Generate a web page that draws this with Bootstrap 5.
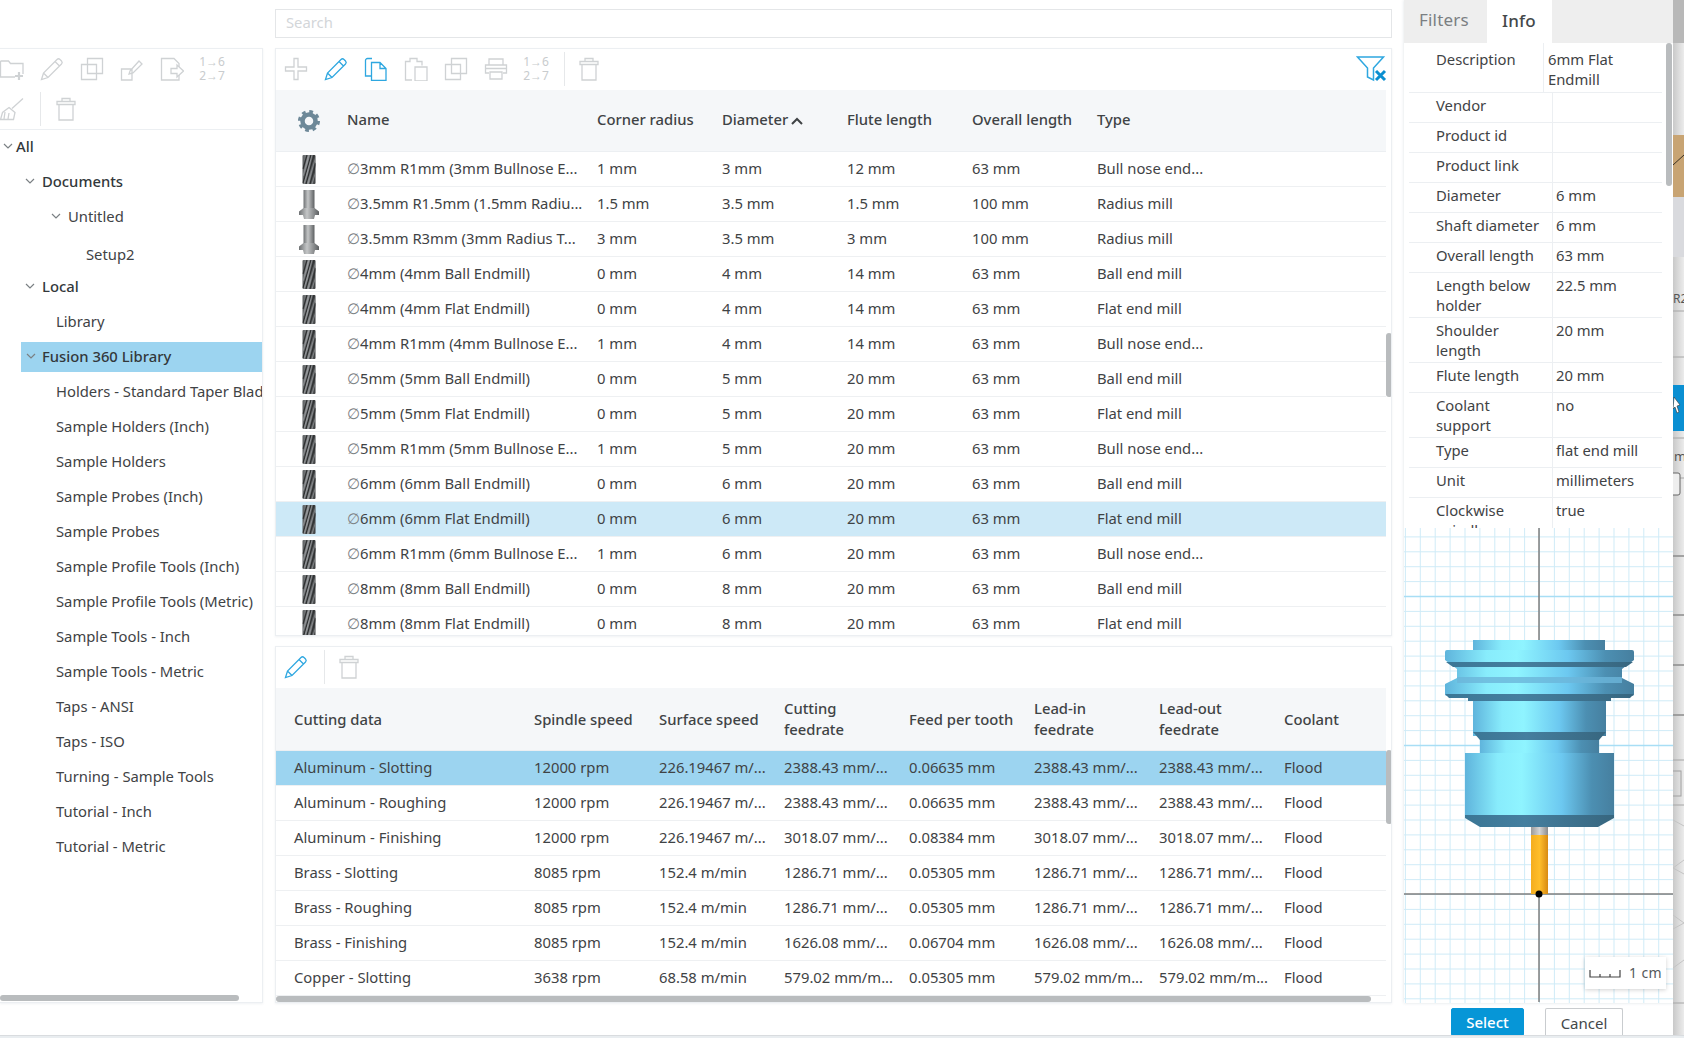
<!DOCTYPE html>
<html lang="en">
<head>
<meta charset="utf-8">
<title>Tool Library</title>
<link href="https://cdn.jsdelivr.net/npm/bootstrap@5.3.0/dist/css/bootstrap.min.css" rel="stylesheet">
<style>
html,body{margin:0;height:1038px;overflow:hidden}
body{width:1684px;background:#fff;color:#3f4345;font-family:"Noto Sans","Liberation Sans",sans-serif;font-size:14.8px;line-height:20px}
.shell{width:1684px;height:1038px}
.workspace{width:1673px;height:1038px}
.upper{height:1003px}
.side-col{width:263px;padding-top:48px;margin-right:12px;flex:none}
.mid-col{width:1117px;margin-right:12px;flex:none}
.right-col{width:269px;flex:none;box-shadow:0 0 3px rgba(60,90,110,.18)}
.pane{background:#fff;border:1px solid #eceff2;box-shadow:0 1px 2px rgba(60,90,110,.08);position:relative;overflow:hidden}
.side-pane{height:955px;border-left:0}
.search-box.form-control{height:29px;margin:9px 0 10px;border:1px solid #e4e6e8;border-radius:0;padding:0 10px 4px;font-size:14.8px;line-height:20px;box-shadow:none}
.search-box::placeholder{color:#d3d6d9}
.tool-pane{height:588px;margin-bottom:10px}
.data-pane{height:357px}
.tbar{height:41px;color:#cfd2d4}
.tbtn{width:40px;height:40px;flex:none;display:flex;align-items:center;justify-content:center;color:#cfd2d4}
.tbtn.on{color:#2ea7e0}
.tbtn svg{width:24px;height:24px;fill:none;stroke:currentColor;stroke-width:1.3}
.tsep{width:1px;height:34px;margin:3px 4px 3px 8px;background:#e6e8ea;flex:none}
.nums{font-size:12px;line-height:14px;color:#c9ccce;text-align:center;white-space:nowrap}
.side-tools{margin-left:-8px;height:81px;border-bottom:1px solid #eceff2;flex-wrap:wrap;align-content:flex-start}
.side-tools .tsep{margin:3px 5px 3px 8px}
.tree{margin:-1px 0 0;padding:0;list-style:none;white-space:nowrap}
.tree li{height:35px;display:flex;align-items:center;padding-bottom:2px}
.tree li.i0{padding-left:3px}
.tree li.i1{padding-left:25px}
.tree li.i1 .chev{margin-right:7px}
.tree li.i2 .chev{margin-right:7px}
.tree li.i2{padding-left:51px}
.tree li.i3{padding-left:86px}
.tree li.l1,.tree li.l2{padding-left:56px}
.tree li.low{padding-top:7px}
.tree li.sel{height:30px;margin:3px 0 2px 21px;padding-left:5px;background:#9cd4f0;font-weight:500;color:#33383b}
.tree li.sel .chev{margin-right:6px}
.chev{width:10px;height:6px;margin-right:3px;fill:none;stroke:#7b8084;stroke-width:1.2;flex:none}
.strong{font-weight:500;color:#33383b}
.grid-t{table-layout:fixed;width:1110px;margin:0;--bs-table-bg:transparent;--bs-table-color:#3f4345;border-collapse:separate;border-spacing:0;white-space:nowrap}
.grid-t>thead>tr>th{background:#f5f7f9;font-weight:500;color:#3f4345;padding:0 8px 0 11px;vertical-align:middle;border-bottom:1px solid #eceff2;white-space:normal;line-height:21px}
.grid-t>tbody>tr>td{height:35px;padding:0 0 2px 11px;vertical-align:middle;border-bottom:1px solid #eef0f2;overflow:hidden}
.hdr-tools>thead>tr>th{height:62px;padding-bottom:2px}
.hdr-data>thead>tr>th{height:63px}
.grid-t>tbody>tr.pick>td{background:#cde9f7}
.grid-t>tbody>tr.pick2>td{background:#9cd4f0}
.c-ic{width:60px}.c-nm{width:250px}.c-125{width:125px}.c-ty{width:300px}
.c-cd{width:247px}.c-co{width:113px}
.grid-t>thead>tr>th.pad-first,.grid-t>tbody>tr>td.pad-first{padding-left:18px}
.grid-t>tbody>tr>td.ic-cell,.grid-t>thead>tr>th.ic-cell{padding:0;text-align:center}
.grid-t .ic-cell svg{display:block;margin:0 auto 0 23px;width:20px;height:29px}
.diam{color:#7d8285}
.sort-up{width:12px;height:8px;margin-left:3px;fill:none;stroke:#3f4345;stroke-width:2}
.grid-t .ic-cell svg.gear{width:24px;height:24px;margin:0 0 0 21px}
.funnel{position:absolute;right:3px;top:6px;width:32px;height:28px}
.thumb{position:absolute;background:#b9bcbe;border-radius:3px}
.th-tool{left:1110px;top:284px;width:6px;height:64px}
.th-data{left:1110px;top:103px;width:6px;height:74px}
.th-dh{left:0;bottom:0;width:1095px;height:6px}
.th-sh{left:0;bottom:1px;width:239px;height:6px}
.th-info{right:1px;top:0;width:6px;height:143px}
.tabbar{height:43px;background:#eeeeee}
.tabbar .nav-link{height:43px;padding:8px 15px 0;font-size:17px;line-height:24px;color:#7b7f82;letter-spacing:.2px;border-radius:0}
.tabbar .tab-f{width:83px}
.tabbar .tab-i{width:65px;background:#fff;color:#44484a;font-weight:500;padding-top:9px}
.info{height:485px;overflow:hidden;position:relative;background:#fff;padding:0 11px 0 5px}
.irow{display:flex;min-height:30px;border-bottom:1px solid #eceff2;line-height:20px}
.irow .k{width:143px;padding:2px 0 2px 27px;flex:none}
.irow .v{flex:1;padding:2px 0 2px 3px;border-left:1px solid #eceff2}
.irow.first .k{width:134px;padding-top:6px;padding-bottom:3px}
.irow.first .v{padding-top:6px;padding-bottom:3px;padding-left:4px}
.irow.two{min-height:45px}
.preview{height:475px;position:relative;overflow:hidden;background:#fff}
.preview>svg{display:block}
.scale-chip{position:absolute;left:181px;top:429px;width:81px;height:32px;background:#fff;box-shadow:0 1px 4px rgba(0,0,0,.18);font-size:14px;color:#55595c;letter-spacing:.4px}
.scale-chip svg{width:32px;height:9px;fill:none;stroke:#444;stroke-width:1.2}
.foot{height:35px;padding-top:5px}
.foot .btn{height:28px;padding:0;font-size:15px;line-height:25px;border-radius:2px}
.btn-go.btn{width:73px;margin-left:1451px;background:#0696d7;border:1px solid #0696d7;color:#fff;font-weight:500}
.btn-no.btn{width:78px;margin-left:21px;height:30px;background:#fff;border:1px solid #c9cccf;color:#44484a;border-bottom:0}
.floor{height:3px;background:#e9edf0;border-top:1px solid #d9dcdf}
.backdrop{width:11px;height:1038px;flex:none;display:block}
</style>
</head>
<body>
<svg width="0" height="0" class="position-absolute">
<defs>
<linearGradient id="millg" x1="0" x2="1" y1="0" y2="0"><stop offset="0" stop-color="#5a5d5f"/><stop offset=".4" stop-color="#8a8d8f"/><stop offset=".7" stop-color="#626567"/><stop offset="1" stop-color="#3a3c3d"/></linearGradient>
<linearGradient id="radg" x1="0" x2="1" y1="0" y2="0"><stop offset="0" stop-color="#6e7173"/><stop offset=".4" stop-color="#c4c6c7"/><stop offset="1" stop-color="#5d6062"/></linearGradient>
<clipPath id="millc"><rect x="3.500" y="0" width="13" height="29" rx="1"/></clipPath>
<symbol id="mill" viewBox="0 0 20 29"><rect x="3.500" y="0" width="13" height="29" rx="1" fill="url(#millg)"/><g clip-path="url(#millc)" fill="none"><path d="M4 14L8 0M4 28L12 0M7 29L15 0M11 29L17 8" stroke="#2f3132" stroke-width="1.300"/><path d="M4 21L10 0M5 29L13 0M9 29L17 1M13 29L17 16" stroke="#a7aaac" stroke-width=".6"/></g></symbol>
<symbol id="radm" viewBox="0 0 20 29"><rect x="4.500" y="0" width="11" height="20" fill="url(#radg)"/><path d="M4.500 18L0 21.500V25h4l1 4h10l1-4h4v-3.500L15.500 18z" fill="url(#radg)"/></symbol>
<symbol id="i-plus" viewBox="0 0 24 24"><path d="M10 1.500h4v8.500h8.500v4H14v8.500h-4V14H1.500v-4H10z"/></symbol>
<symbol id="i-pen" viewBox="0 0 24 24"><path d="M1.500 22.500l2-6.500L17 2.500a2.200 2.200 0 0 1 3 0L21.500 4a2.200 2.200 0 0 1 0 3L8 20.500zM3.500 16L8 20.500M15 4.500L19.500 9"/></symbol>
<symbol id="i-copy" viewBox="0 0 24 24"><path d="M8 1.500H3.500a2 2 0 0 0-2 2V19H7M7.500 5.500H16l6 6v12H7.500zM16 5.500v6h6"/></symbol>
<symbol id="i-paste" viewBox="0 0 24 24"><path d="M8 23H1.500V4.500H6V1.500h7v3h5v4M11 10h12v14H11z"/></symbol>
<symbol id="i-dup" viewBox="0 0 24 24"><path d="M7.500 1.500h15v15h-15zM1.500 7.500h15v15h-15z"/></symbol>
<symbol id="i-print" viewBox="0 0 24 24"><path d="M5 8V2h14v6M5 16H1.500V8h21v8H19M1.500 11.500h21M6 15h12v7H6z"/></symbol>
<symbol id="i-trash" viewBox="0 0 24 24"><path d="M5 7.500h14V23H5zM3 4.500h18v3H3zM8 4.500V1.500h8v3"/></symbol>
<symbol id="i-folder" viewBox="0 0 24 24"><path d="M.5 4h8l2 2.500H23V17M.5 4v16H15"/><path d="M19 15v8M15 19h8" stroke-width="2.200"/></symbol>
<symbol id="i-export" viewBox="0 0 24 24"><path d="M1.500 12h10.500v11H1.500zM10 14l9-10 3 3-9 9-4 1z"/></symbol>
<symbol id="i-file" viewBox="0 0 24 24"><path d="M19 10V6.500L14 1.500H1.500V23H19v-5"/><path d="M11 11.500h6V8l6.500 6-6.500 6v-3.500h-6z"/></symbol>
<symbol id="i-broom" viewBox="0 0 24 24"><path d="M23 1.500L12 11.500M9 10.500l6 5-1.500 7H.5l2-7zM5 15l-1 7M9 16l-1 6"/></symbol>
</defs>
</svg>

<div class="shell d-flex">
<div class="workspace d-flex flex-column">
<div class="upper d-flex">

<aside class="side-col">
<div class="pane side-pane">
<div class="side-tools d-flex">
<div class="tbtn"><svg><use href="#i-folder"/></svg></div>
<div class="tbtn"><svg><use href="#i-pen"/></svg></div>
<div class="tbtn"><svg><use href="#i-dup"/></svg></div>
<div class="tbtn"><svg><use href="#i-export"/></svg></div>
<div class="tbtn"><svg><use href="#i-file"/></svg></div>
<div class="tbtn"><div class="nums">1→6<br>2→7</div></div>
<div class="tbtn"><svg><use href="#i-broom"/></svg></div>
<div class="tsep"></div>
<div class="tbtn"><svg><use href="#i-trash"/></svg></div>
</div>
<ul class="tree">
<li class="i0 strong"><svg class="chev" viewBox="0 0 10 6"><path d="M1 1l4 4 4-4"/></svg>All</li>
<li class="i1 strong"><svg class="chev" viewBox="0 0 10 6"><path d="M1 1l4 4 4-4"/></svg>Documents</li>
<li class="i2"><svg class="chev" viewBox="0 0 10 6"><path d="M1 1l4 4 4-4"/></svg>Untitled</li>
<li class="i3 low">Setup2</li>
<li class="i1 strong"><svg class="chev" viewBox="0 0 10 6"><path d="M1 1l4 4 4-4"/></svg>Local</li>
<li class="l1">Library</li>
<li class="sel"><svg class="chev" viewBox="0 0 10 6"><path d="M1 1l4 4 4-4"/></svg>Fusion 360 Library</li>
<li class="l2">Holders - Standard Taper Blades</li>
<li class="l2">Sample Holders (Inch)</li>
<li class="l2">Sample Holders</li>
<li class="l2">Sample Probes (Inch)</li>
<li class="l2">Sample Probes</li>
<li class="l2">Sample Profile Tools (Inch)</li>
<li class="l2">Sample Profile Tools (Metric)</li>
<li class="l2">Sample Tools - Inch</li>
<li class="l2">Sample Tools - Metric</li>
<li class="l2">Taps - ANSI</li>
<li class="l2">Taps - ISO</li>
<li class="l2">Turning - Sample Tools</li>
<li class="l2">Tutorial - Inch</li>
<li class="l2">Tutorial - Metric</li>
</ul>
<div class="thumb th-sh"></div>
</div>
</aside>

<main class="mid-col">
<input class="form-control search-box" type="text" placeholder="Search">
<section class="pane tool-pane">
<div class="tbar d-flex">
<div class="tbtn"><svg><use href="#i-plus"/></svg></div>
<div class="tbtn on"><svg><use href="#i-pen"/></svg></div>
<div class="tbtn on"><svg><use href="#i-copy"/></svg></div>
<div class="tbtn"><svg><use href="#i-paste"/></svg></div>
<div class="tbtn"><svg><use href="#i-dup"/></svg></div>
<div class="tbtn"><svg><use href="#i-print"/></svg></div>
<div class="tbtn"><div class="nums">1→6<br>2→7</div></div>
<div class="tsep"></div>
<div class="tbtn"><svg><use href="#i-trash"/></svg></div>
</div>
<svg class="funnel" viewBox="0 0 32 28"><path d="M1.500 2h26l-10 11v12l-6-3V13z" fill="#fff" stroke="#2ea7e0" stroke-width="1.500"/><path d="M20 16l9 9M29 16l-9 9" stroke="#0b8fd0" stroke-width="3" fill="none"/></svg>
<table class="table grid-t hdr-tools">
<colgroup><col class="c-ic"><col class="c-nm"><col class="c-125"><col class="c-125"><col class="c-125"><col class="c-125"><col class="c-ty"></colgroup>
<thead><tr>
<th class="ic-cell"><svg class="gear" viewBox="0 0 24 24"><circle cx="12" cy="12" r="6.500" fill="none" stroke="#6d8898" stroke-width="4.500"/><circle cx="12" cy="12" r="9.500" fill="none" stroke="#6d8898" stroke-width="3" stroke-dasharray="3.730 3.730"/></svg></th>
<th>Name</th><th>Corner radius</th><th>Diameter<svg class="sort-up" viewBox="0 0 12 8"><path d="M1 7l5-5 5 5"/></svg></th><th>Flute length</th><th>Overall length</th><th>Type</th>
</tr></thead>
<tbody>
<tr><td class="ic-cell"><svg><use href="#mill"/></svg></td><td><span class="diam">∅</span>3mm R1mm (3mm Bullnose E...</td><td>1 mm</td><td>3 mm</td><td>12 mm</td><td>63 mm</td><td>Bull nose end...</td></tr>
<tr><td class="ic-cell"><svg><use href="#radm"/></svg></td><td><span class="diam">∅</span>3.5mm R1.5mm (1.5mm Radiu...</td><td>1.5 mm</td><td>3.5 mm</td><td>1.5 mm</td><td>100 mm</td><td>Radius mill</td></tr>
<tr><td class="ic-cell"><svg><use href="#radm"/></svg></td><td><span class="diam">∅</span>3.5mm R3mm (3mm Radius T...</td><td>3 mm</td><td>3.5 mm</td><td>3 mm</td><td>100 mm</td><td>Radius mill</td></tr>
<tr><td class="ic-cell"><svg><use href="#mill"/></svg></td><td><span class="diam">∅</span>4mm (4mm Ball Endmill)</td><td>0 mm</td><td>4 mm</td><td>14 mm</td><td>63 mm</td><td>Ball end mill</td></tr>
<tr><td class="ic-cell"><svg><use href="#mill"/></svg></td><td><span class="diam">∅</span>4mm (4mm Flat Endmill)</td><td>0 mm</td><td>4 mm</td><td>14 mm</td><td>63 mm</td><td>Flat end mill</td></tr>
<tr><td class="ic-cell"><svg><use href="#mill"/></svg></td><td><span class="diam">∅</span>4mm R1mm (4mm Bullnose E...</td><td>1 mm</td><td>4 mm</td><td>14 mm</td><td>63 mm</td><td>Bull nose end...</td></tr>
<tr><td class="ic-cell"><svg><use href="#mill"/></svg></td><td><span class="diam">∅</span>5mm (5mm Ball Endmill)</td><td>0 mm</td><td>5 mm</td><td>20 mm</td><td>63 mm</td><td>Ball end mill</td></tr>
<tr><td class="ic-cell"><svg><use href="#mill"/></svg></td><td><span class="diam">∅</span>5mm (5mm Flat Endmill)</td><td>0 mm</td><td>5 mm</td><td>20 mm</td><td>63 mm</td><td>Flat end mill</td></tr>
<tr><td class="ic-cell"><svg><use href="#mill"/></svg></td><td><span class="diam">∅</span>5mm R1mm (5mm Bullnose E...</td><td>1 mm</td><td>5 mm</td><td>20 mm</td><td>63 mm</td><td>Bull nose end...</td></tr>
<tr><td class="ic-cell"><svg><use href="#mill"/></svg></td><td><span class="diam">∅</span>6mm (6mm Ball Endmill)</td><td>0 mm</td><td>6 mm</td><td>20 mm</td><td>63 mm</td><td>Ball end mill</td></tr>
<tr class="pick"><td class="ic-cell"><svg><use href="#mill"/></svg></td><td><span class="diam">∅</span>6mm (6mm Flat Endmill)</td><td>0 mm</td><td>6 mm</td><td>20 mm</td><td>63 mm</td><td>Flat end mill</td></tr>
<tr><td class="ic-cell"><svg><use href="#mill"/></svg></td><td><span class="diam">∅</span>6mm R1mm (6mm Bullnose E...</td><td>1 mm</td><td>6 mm</td><td>20 mm</td><td>63 mm</td><td>Bull nose end...</td></tr>
<tr><td class="ic-cell"><svg><use href="#mill"/></svg></td><td><span class="diam">∅</span>8mm (8mm Ball Endmill)</td><td>0 mm</td><td>8 mm</td><td>20 mm</td><td>63 mm</td><td>Ball end mill</td></tr>
<tr><td class="ic-cell"><svg><use href="#mill"/></svg></td><td><span class="diam">∅</span>8mm (8mm Flat Endmill)</td><td>0 mm</td><td>8 mm</td><td>20 mm</td><td>63 mm</td><td>Flat end mill</td></tr>
</tbody>
</table>
<div class="thumb th-tool"></div>
</section>

<section class="pane data-pane">
<div class="tbar d-flex">
<div class="tbtn on"><svg><use href="#i-pen"/></svg></div>
<div class="tsep"></div>
<div class="tbtn"><svg><use href="#i-trash"/></svg></div>
</div>
<table class="table grid-t hdr-data">
<colgroup><col class="c-cd"><col class="c-125"><col class="c-125"><col class="c-125"><col class="c-125"><col class="c-125"><col class="c-125"><col class="c-co"></colgroup>
<thead><tr>
<th class="pad-first">Cutting data</th><th>Spindle speed</th><th>Surface speed</th><th>Cutting feedrate</th><th>Feed per tooth</th><th>Lead-in feedrate</th><th>Lead-out feedrate</th><th>Coolant</th>
</tr></thead>
<tbody>
<tr class="pick2"><td class="pad-first">Aluminum - Slotting</td><td>12000 rpm</td><td>226.19467 m/...</td><td>2388.43 mm/...</td><td>0.06635 mm</td><td>2388.43 mm/...</td><td>2388.43 mm/...</td><td>Flood</td></tr>
<tr><td class="pad-first">Aluminum - Roughing</td><td>12000 rpm</td><td>226.19467 m/...</td><td>2388.43 mm/...</td><td>0.06635 mm</td><td>2388.43 mm/...</td><td>2388.43 mm/...</td><td>Flood</td></tr>
<tr><td class="pad-first">Aluminum - Finishing</td><td>12000 rpm</td><td>226.19467 m/...</td><td>3018.07 mm/...</td><td>0.08384 mm</td><td>3018.07 mm/...</td><td>3018.07 mm/...</td><td>Flood</td></tr>
<tr><td class="pad-first">Brass - Slotting</td><td>8085 rpm</td><td>152.4 m/min</td><td>1286.71 mm/...</td><td>0.05305 mm</td><td>1286.71 mm/...</td><td>1286.71 mm/...</td><td>Flood</td></tr>
<tr><td class="pad-first">Brass - Roughing</td><td>8085 rpm</td><td>152.4 m/min</td><td>1286.71 mm/...</td><td>0.05305 mm</td><td>1286.71 mm/...</td><td>1286.71 mm/...</td><td>Flood</td></tr>
<tr><td class="pad-first">Brass - Finishing</td><td>8085 rpm</td><td>152.4 m/min</td><td>1626.08 mm/...</td><td>0.06704 mm</td><td>1626.08 mm/...</td><td>1626.08 mm/...</td><td>Flood</td></tr>
<tr><td class="pad-first">Copper - Slotting</td><td>3638 rpm</td><td>68.58 m/min</td><td>579.02 mm/m...</td><td>0.05305 mm</td><td>579.02 mm/m...</td><td>579.02 mm/m...</td><td>Flood</td></tr>
</tbody>
</table>
<div class="thumb th-data"></div>
<div class="thumb th-dh"></div>
</section>
</main>

<section class="right-col">
<nav class="nav tabbar">
<a class="nav-link tab-f" href="#">Filters</a>
<a class="nav-link tab-i" href="#">Info</a>
</nav>
<div class="info">
<div class="irow first"><div class="k">Description</div><div class="v">6mm Flat Endmill</div></div>
<div class="irow"><div class="k">Vendor</div><div class="v"></div></div>
<div class="irow"><div class="k">Product id</div><div class="v"></div></div>
<div class="irow"><div class="k">Product link</div><div class="v"></div></div>
<div class="irow"><div class="k">Diameter</div><div class="v">6 mm</div></div>
<div class="irow"><div class="k">Shaft diameter</div><div class="v">6 mm</div></div>
<div class="irow"><div class="k">Overall length</div><div class="v">63 mm</div></div>
<div class="irow two"><div class="k">Length below<br>holder</div><div class="v">22.5 mm</div></div>
<div class="irow two"><div class="k">Shoulder<br>length</div><div class="v">20 mm</div></div>
<div class="irow"><div class="k">Flute length</div><div class="v">20 mm</div></div>
<div class="irow two"><div class="k">Coolant<br>support</div><div class="v">no</div></div>
<div class="irow"><div class="k">Type</div><div class="v">flat end mill</div></div>
<div class="irow"><div class="k">Unit</div><div class="v">millimeters</div></div>
<div class="irow two"><div class="k">Clockwise<br>spindle</div><div class="v">true</div></div>
<div class="thumb th-info"></div>
</div>
<div class="preview">
<svg width="269" height="475" viewBox="0 0 269 475">
<defs>
<pattern id="minor" width="14.9" height="14.9" patternUnits="userSpaceOnUse" patternTransform="translate(.9 8.4)"><path d="M0 .5H14.900M.5 0V14.900" stroke="#cfebf7" stroke-width="1" fill="none"/></pattern>
<linearGradient id="steel" x1="0" x2="1" y1="0" y2="0"><stop offset="0" stop-color="#5fb4dc"/><stop offset=".22" stop-color="#88ecfc"/><stop offset=".38" stop-color="#8ff4ff"/><stop offset=".65" stop-color="#6cc8f0"/><stop offset=".85" stop-color="#4c8fb2"/><stop offset="1" stop-color="#467f9f"/></linearGradient>
<linearGradient id="shade" x1="0" x2="1" y1="0" y2="0"><stop offset="0" stop-color="#3b7695"/><stop offset=".4" stop-color="#457f9f"/><stop offset="1" stop-color="#37667f"/></linearGradient>
<linearGradient id="amber" x1="0" x2="1" y1="0" y2="0"><stop offset="0" stop-color="#f4ad1e"/><stop offset=".5" stop-color="#ffbe2a"/><stop offset="1" stop-color="#d88a12"/></linearGradient>
<linearGradient id="silver" x1="0" x2="1" y1="0" y2="0"><stop offset="0" stop-color="#9a9a9a"/><stop offset=".5" stop-color="#d4d4d4"/><stop offset="1" stop-color="#8c8c8c"/></linearGradient>
</defs>
<rect width="269" height="475" fill="url(#minor)"/>
<path d="M0 68.500H269M0 217.500H269" stroke="#a8def5" stroke-width="1.500"/>
<path d="M135 0V112M135 300V474M0 366H269" stroke="#7f7f7f" stroke-width="1.500"/>
<rect x="69" y="112" width="132" height="10" fill="url(#steel)"/>
<path d="M41 124a2 2 0 0 1 2-2H228a2 2 0 0 1 2 2V132L218 141V150L230 156V166a2 2 0 0 1-2 2H43a2 2 0 0 1-2-2V156L53 150V141L41 132Z" fill="url(#steel)"/>
<path d="M42 134H229L222 139H49Z" fill="url(#shade)"/>
<path d="M53 149H218V155H53Z" fill="#6cb5d9" opacity=".8"/>
<path d="M41 166H230L226 170H207V173H64V170H45Z" fill="url(#shade)"/>
<rect x="69" y="173" width="133" height="35" fill="url(#steel)"/>
<path d="M69 204H202L195 212H76Z" fill="url(#shade)"/>
<rect x="76" y="212" width="119" height="13" fill="url(#steel)"/>
<path d="M61 225H210V287H61Z" fill="url(#steel)"/>
<path d="M61 287H210V290L194 299H76L61 290Z" fill="url(#shade)"/>
<rect x="127" y="299" width="17" height="8" fill="url(#silver)"/>
<rect x="127" y="307" width="17" height="59" fill="url(#amber)"/>
<circle cx="135" cy="366" r="3.500" fill="#000"/>
</svg>
<div class="scale-chip d-flex align-items-center justify-content-center gap-2">
<svg viewBox="0 0 32 9"><path d="M1 1V8H31V1M11 5V8M21 5V8"/></svg><span>1 cm</span>
</div>
</div>
</section>
</div>

<div class="foot d-flex align-items-start">
<button class="btn btn-go" type="button">Select</button>
<button class="btn btn-no" type="button">Cancel</button>
</div>
</div>

<svg class="backdrop" viewBox="0 0 11 1038">
<defs><linearGradient id="bk" x1="0" x2="1" y1="0" y2="0"><stop offset="0" stop-color="#c9c9c9"/><stop offset="1" stop-color="#ececec"/></linearGradient></defs>
<rect width="11" height="1038" fill="url(#bk)"/>
<rect width="11" height="43" fill="#b8b8b8"/>
<rect y="135" width="11" height="62" fill="#c8a473"/>
<path d="M0 165L11 155" stroke="#3a3023" stroke-width="1"/>
<rect y="197" width="11" height="60" fill="#d9dade"/>
<text x="0" y="303" font-family="Noto Sans, sans-serif" font-size="12" fill="#555">R2</text>
<path d="M0 311H11M0 357H11" stroke="#a6a6a6"/>
<rect y="385" width="11" height="46" fill="#0a8fd2"/>
<path d="M1 397l6 8-3 1 2 6-2 1-2-6-2 2z" fill="#fff" stroke="#333" stroke-width=".6"/>
<text x="1" y="461" font-family="Noto Sans, sans-serif" font-size="13" fill="#555">m</text>
<path d="M0 438H11M0 478H11" stroke="#a6a6a6"/>
<rect x="-4" y="473" width="11" height="22" rx="2" fill="#eee" stroke="#666"/>
<path d="M0 556H11M0 615H11M0 665H11M0 715H11" stroke="#8c8c8c" stroke-width="1.600"/>
<path d="M0 760H11M0 805H11M0 1003H11" stroke="#a6a6a6"/>
<rect x="-2" y="771" width="10" height="25" fill="none" stroke="#a0a0a0"/>
<path d="M0 820l11 6M11 860l-11 8 11 6M0 915l11 8-11 6M11 960l-11 8" stroke="#c4c4c4" fill="none"/>
</svg>
</div>
<div class="floor position-absolute bottom-0 start-0 w-100"></div>
</body>
</html>
